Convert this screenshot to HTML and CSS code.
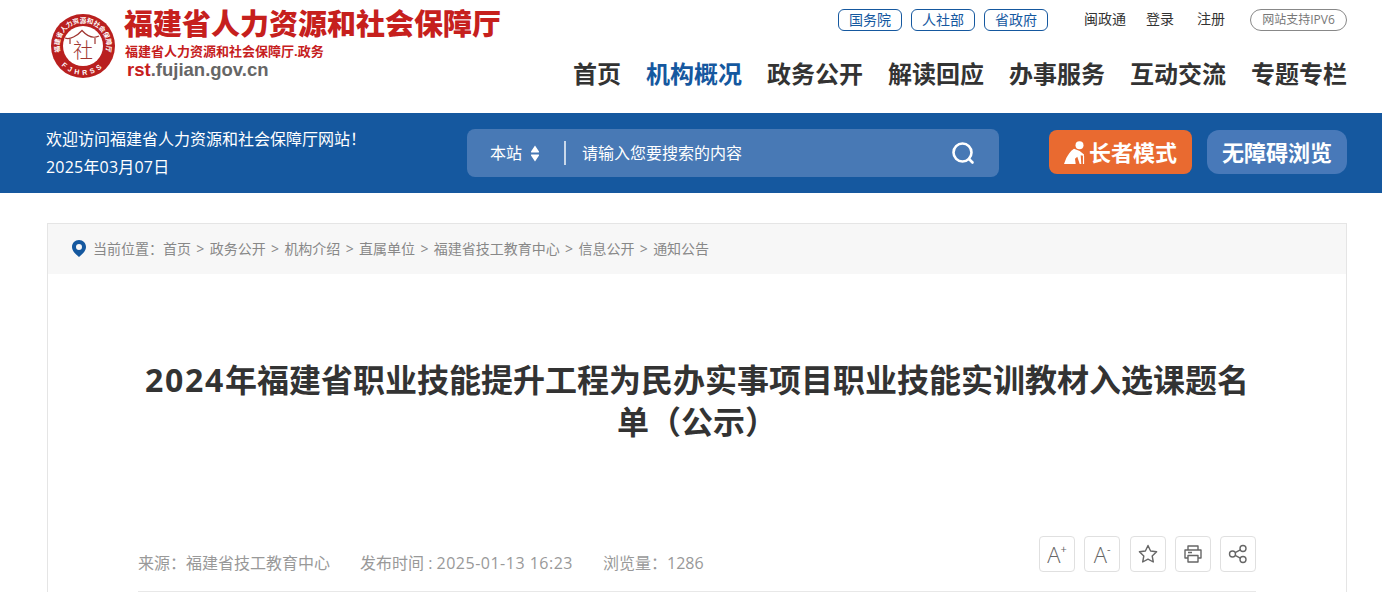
FILE: index.html
```html
<!DOCTYPE html>
<html lang="zh-CN">
<head>
    <meta charset="UTF-8">
    <meta name="viewport" content="width=device-width, initial-scale=1.0">
    <title>福建省人力资源和社会保障厅</title>
    <link rel="stylesheet" href="styles.css">
</head>
<body>
    <header class="header">
        <div class="wrap header-inner">
            <a class="logo" href="#">
                <svg class="seal" width="66" height="66" viewBox="0 0 66 66">
                    <defs>
                        <path id="sealTop" d="M12.2 44 A23.5 23.5 0 1 1 53.8 44"/>
                        <path id="sealBottom" d="M6.2 44 A29 29 0 0 0 59.8 44"/>
                    </defs>
                    <circle cx="33" cy="33" r="32" fill="#b9201f"/>
                    <circle cx="33" cy="33" r="20" fill="#fff"/>
                    <text class="seal-top"><textPath href="#sealTop" startOffset="50%" text-anchor="middle">福建省人力资源和社会保障厅</textPath></text>
                    <text class="seal-bottom"><textPath href="#sealBottom" startOffset="50%" text-anchor="middle">FJHRSS</textPath></text>
                    <path d="M15 25 C20 27 27 23 32 17.5 C37 23 43 26 49 23 M20 26 V31 M45 25 V31" fill="none" stroke="#a03530" stroke-width="1.2"/>
                    <text class="seal-char" x="33" y="45" text-anchor="middle">社</text>
                </svg>
                <div class="logo-text">
                    <div class="logo-title">福建省人力资源和社会保障厅</div>
                    <div class="logo-sub">福建省人力资源和社会保障厅.政务</div>
                    <div class="logo-url"><span>rst</span>.fujian.gov.cn</div>
                </div>
            </a>
            <div class="header-right">
                <div class="top-links">
                    <a class="pill" href="#">国务院</a>
                    <a class="pill" href="#">人社部</a>
                    <a class="pill" href="#">省政府</a>
                    <a class="top-link first" href="#">闽政通</a>
                    <a class="top-link" href="#">登录</a>
                    <a class="top-link last" href="#">注册</a>
                    <span class="ipv6">网站支持IPV6</span>
                </div>
                <nav class="nav">
                    <a href="#">首页</a>
                    <a class="active" href="#">机构概况</a>
                    <a href="#">政务公开</a>
                    <a href="#">解读回应</a>
                    <a href="#">办事服务</a>
                    <a href="#">互动交流</a>
                    <a href="#">专题专栏</a>
                </nav>
            </div>
        </div>
    </header>

    <div class="band">
        <div class="wrap band-inner">
            <div class="welcome">
                <p>欢迎访问福建省人力资源和社会保障厅网站！</p>
                <p class="welcome-date">2025年03月07日</p>
            </div>
            <div class="search">
                <span class="scope">本站</span>
                <svg class="scope-arrows" width="10" height="17" viewBox="0 0 10 17">
                    <path d="M5 0.5 L9 6.5 Q9.3 7.5 8.5 7.5 H1.5 Q0.7 7.5 1 6.5 Z M5 16.5 L1 10.5 Q0.7 9.5 1.5 9.5 H8.5 Q9.3 9.5 9 10.5 Z" fill="#fff"/>
                </svg>
                <span class="search-line"></span>
                <span class="search-text">请输入您要搜索的内容</span>
                <svg class="search-icon" width="24" height="24" viewBox="0 0 24 24" fill="none" stroke="#fff" stroke-width="2.6" stroke-linecap="round">
                    <circle cx="11.5" cy="11.5" r="9"/>
                    <path d="M18 18 L21.5 21.5"/>
                </svg>
            </div>
            <div class="modes">
                <a class="mode mode-elder" href="#">
                    <svg width="21" height="23" viewBox="0 0 21 23" fill="#fff">
                        <circle cx="15.5" cy="4.3" r="4"/>
                        <path d="M10 7.7 C6 10 4 14 2.3 17 L0 23 H11.7 L11 17.7 L13.3 15.7 L15.7 23 H17.3 L16.7 14.3 L20 15 V13.6 L15.7 10 Z"/>
                        <path d="M19.5 15 V23" fill="none" stroke="#fff" stroke-width="1.2"/>
                    </svg>
                    <span>长者模式</span>
                </a>
                <a class="mode mode-access" href="#"><span>无障碍浏览</span></a>
            </div>
        </div>
    </div>

    <main class="wrap article">
        <div class="crumbs">
            <svg width="14" height="17" viewBox="0 0 14 17">
                <path fill-rule="evenodd" fill="#15589f" d="M7 0 C11 0 14 3 14 7 C14 11 10 14.5 7 17 C4 14.5 0 11 0 7 C0 3 3 0 7 0 Z M7 4 A3 3 0 1 0 7 10 A3 3 0 1 0 7 4 Z"/>
            </svg>
            <span class="crumb-label">当前位置：</span>
            <a href="#">首页</a><i>&gt;</i>
            <a href="#">政务公开</a><i>&gt;</i>
            <a href="#">机构介绍</a><i>&gt;</i>
            <a href="#">直属单位</a><i>&gt;</i>
            <a href="#">福建省技工教育中心</a><i>&gt;</i>
            <a href="#">信息公开</a><i>&gt;</i>
            <a href="#">通知公告</a>
        </div>
        <div class="article-body">
            <h1><span class="year">2024</span>年福建省职业技能提升工程为民办实事项目职业技能实训教材入选课题名单（公示）</h1>
            <div class="meta">
                <div class="meta-text">
                    <span>来源：福建省技工教育中心</span>
                    <span>发布时间 : <span class="date">2025-01-13 16:23</span></span>
                    <span>浏览量：1286</span>
                </div>
                <div class="tools">
                    <a class="tool" href="#"><span class="font-a">A</span><sup>+</sup></a>
                    <a class="tool" href="#"><span class="font-a">A</span><sup>-</sup></a>
                    <a class="tool" href="#">
                        <svg width="20" height="20" viewBox="0 0 20 20" fill="none" stroke="#666" stroke-width="1.4" stroke-linejoin="round">
                            <path d="M10 1.5 L12.6 7 L18.6 7.8 L14.2 12 L15.3 18 L10 15.1 L4.7 18 L5.8 12 L1.4 7.8 L7.4 7 Z"/>
                        </svg>
                    </a>
                    <a class="tool" href="#">
                        <svg width="20" height="20" viewBox="0 0 20 20" fill="none" stroke="#666" stroke-width="1.4" stroke-linejoin="round">
                            <path d="M5 6 V2 H15 V6 M5 14 H2 V6 H18 V14 H15 M5 11.5 H15 V18 H5 Z M5 8.5 H9"/>
                        </svg>
                    </a>
                    <a class="tool" href="#">
                        <svg width="20" height="20" viewBox="0 0 20 20" fill="none" stroke="#666" stroke-width="1.4">
                            <circle cx="4.5" cy="10" r="3"/>
                            <circle cx="15" cy="4.5" r="3"/>
                            <circle cx="15" cy="15.5" r="3"/>
                            <path d="M7.2 8.6 L12.3 5.9 M7.2 11.4 L12.3 14.1"/>
                        </svg>
                    </a>
                </div>
            </div>
        </div>
    </main>
</body>
</html>
```

FILE: styles.css
```css
* {
    margin: 0;
    padding: 0;
    box-sizing: border-box;
}

body {
    font-family: "Open Sans", "Noto Sans CJK SC", "Liberation Sans", sans-serif;
    background: #fff;
    color: #333;
    overflow: hidden;
}

a {
    color: inherit;
    text-decoration: none;
}

.wrap {
    width: 1300px;
    margin-left: 47px;
}

.header {
    height: 113px;
}

.header-inner {
    display: flex;
    justify-content: space-between;
}

.logo {
    display: flex;
    padding: 13px 0 0 3px;
}

.seal {
    flex: none;
}

.seal-top {
    font-size: 6.6px;
    font-weight: 700;
    fill: #fff;
}

.seal-bottom {
    font-family: "Liberation Sans", sans-serif;
    font-size: 7px;
    font-weight: 700;
    letter-spacing: 3.5px;
    fill: #fff;
}

.seal-char {
    font-size: 20px;
    font-weight: 300;
    fill: #a03530;
}

.logo-text {
    margin-left: 8px;
    margin-top: -6px;
}

.logo-title {
    font-size: 29px;
    font-weight: 900;
    line-height: 34px;
    color: #c6201d;
    white-space: nowrap;
}

.logo-sub {
    font-size: 13px;
    font-weight: 700;
    line-height: 17px;
    margin-top: 2px;
    margin-left: 1px;
    color: #c6201d;
}

.logo-url {
    font-family: "Liberation Sans", sans-serif;
    font-size: 18.5px;
    font-weight: 700;
    line-height: 20px;
    margin-left: 3px;
    color: #666;
}

.logo-url span {
    color: #c6201d;
}

.header-right {
    display: flex;
    flex-direction: column;
    align-items: flex-end;
}

.top-links {
    display: flex;
    align-items: center;
    margin-top: 9px;
    font-size: 14px;
    height: 22px;
}

.pill {
    width: 64px;
    height: 22px;
    margin-right: 9px;
    border: 1px solid #15589f;
    border-radius: 6px;
    color: #15589f;
    line-height: 19px;
    text-align: center;
}

.top-link {
    margin-left: 20px;
    color: #333;
    line-height: 19px;
    padding-bottom: 3px;
}

.top-link.first {
    margin-left: 27px;
}

.top-link.last {
    margin-left: 23px;
}

.ipv6 {
    width: 97px;
    height: 22px;
    margin-left: 25px;
    border: 1px solid #888;
    border-radius: 11px;
    font-size: 12px;
    line-height: 19px;
    color: #777;
    text-align: center;
}

.nav {
    display: flex;
    gap: 25px;
    margin-top: 13px;
    font-size: 24px;
    font-weight: 700;
    color: #333;
    height: 60px;
    align-items: center;
}

.nav a {
    line-height: 34px;
}

.nav .active {
    color: #15589f;
}

.band {
    height: 80px;
    background: #15589f;
}

.band-inner {
    display: flex;
    align-items: center;
    height: 80px;
}

.welcome {
    width: 420px;
    color: #fff;
    font-size: 16px;
    line-height: 28px;
    margin-left: -1px;
    margin-right: 1px;
}

.welcome-date {
    letter-spacing: 0.2px;
}

.search {
    width: 532px;
    height: 48px;
    display: flex;
    align-items: center;
    padding: 0 23px;
    background: #4879b5;
    border-radius: 8px;
    color: #fff;
    font-size: 16px;
}

.scope,
.search-text {
    line-height: 22px;
}

.scope-arrows {
    margin-left: 8px;
}

.search-line {
    width: 2px;
    height: 24px;
    margin: 0 16px 0 24px;
    background: #c9d8ea;
}

.search-text {
    flex: 1;
}

.search-icon {
    margin-right: 1px;
}

.modes {
    display: flex;
    gap: 15px;
    margin-left: 50px;
    margin-top: -2px;
}

.mode {
    display: flex;
    align-items: center;
    justify-content: center;
    height: 44px;
    border-radius: 8px;
    color: #fff;
    font-size: 22px;
    font-weight: 700;
}

.mode span {
    padding-bottom: 2px;
}

.mode-elder {
    width: 143px;
    gap: 4px;
    background: #e96a30;
}

.mode-access {
    width: 140px;
    border-radius: 12px;
    background: #4879b9;
}

.article {
    margin-top: 30px;
    border: 1px solid #e5e5e5;
    border-bottom: 0;
}

.crumbs {
    display: flex;
    align-items: center;
    height: 50px;
    padding-left: 24px;
    padding-bottom: 2px;
    background: #f7f7f7;
    font-size: 14px;
    color: #888;
}

.crumb-label {
    margin-left: 7px;
}

.crumbs i {
    font-style: normal;
    width: 18.7px;
    text-align: center;
}

.article-body {
    padding: 85px 90px 0;
}

h1 {
    font-size: 32px;
    font-weight: 700;
    line-height: 42px;
    color: #333;
    text-align: center;
}

.year {
    letter-spacing: 1.7px;
}

.meta {
    display: flex;
    justify-content: space-between;
    margin-top: 93px;
    height: 56px;
    border-bottom: 1px solid #e8e8e8;
    padding-bottom: 19px;
}

.meta-text {
    display: flex;
    gap: 30px;
    align-items: center;
    margin-top: 15px;
    font-size: 16px;
    color: #999;
}

.date {
    letter-spacing: 0.5px;
}

.tools {
    display: flex;
    gap: 9.25px;
}

.tool {
    display: flex;
    align-items: center;
    justify-content: center;
    width: 36px;
    height: 36px;
    border: 1px solid #e0e0e0;
    border-radius: 4px;
    color: #666;
}

.font-a {
    font-size: 22px;
    font-weight: 300;
}

.tool sup {
    font-size: 11px;
    line-height: 1;
    margin-bottom: 12px;
}
```
